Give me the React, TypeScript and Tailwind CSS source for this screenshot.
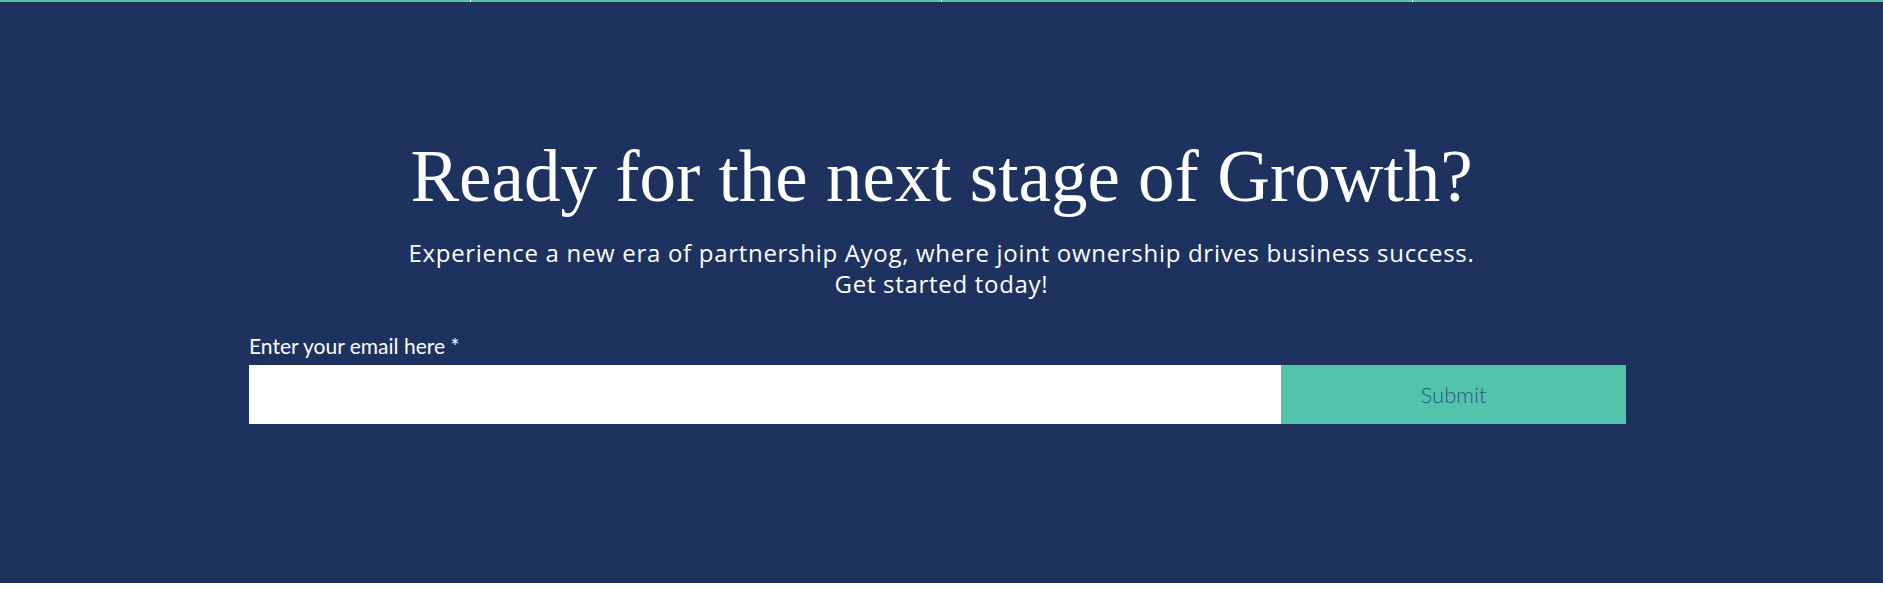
const App = () => {
  return (
    <div className="w-full bg-white">
      {/* top accent strip */}
      <div className="grid grid-cols-4 gap-px bg-white h-[2px]">
        <div className="bg-[#52c4ab]"></div>
        <div className="bg-[#52c4ab]"></div>
        <div className="bg-[#52c4ab]"></div>
        <div className="bg-[#52c4ab]"></div>
      </div>

      <section className="bg-[#1d325f] h-[581px] flex flex-col items-center pt-[135px]">
        <h2 className="text-white text-[73px] leading-[80px] font-['Liberation_Serif',Georgia,serif] text-center">
          Ready for the next stage of Growth?
        </h2>
        <p className="text-white text-[24px] leading-[31px] tracking-[0.7px] text-center mt-[20px] font-['Open_Sans',sans-serif]">
          Experience a new era of partnership Ayog, where joint ownership drives business success.
          <br />
          Get started today!
        </p>

        <form className="w-[1377px] mt-[34px] ml-[-8px]" onSubmit={(e) => e.preventDefault()}>
          <label className="block text-white text-[21px] leading-[25px] mb-[7px] font-['Lato',sans-serif]">
            Enter your email here *
          </label>
          <div className="flex h-[59px]">
            <input type="email" className="flex-1 bg-white outline-none px-4 text-[18px]" />
            <button className="w-[345px] bg-[#52c4ab] text-[#2d5a7c] text-[22px] font-light font-['Lato',sans-serif]">
              Submit
            </button>
          </div>
        </form>
      </section>
    </div>
  );
};

export default App;
